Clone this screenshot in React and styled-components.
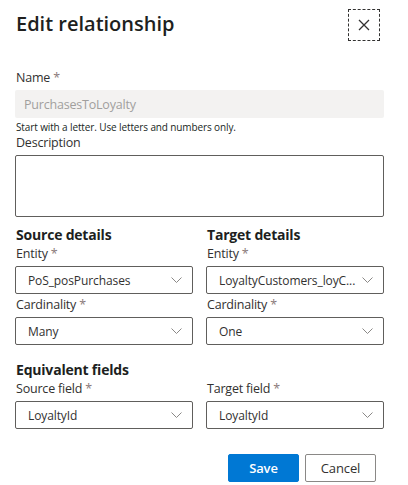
import styled, { createGlobalStyle } from "styled-components";

const GlobalStyle = createGlobalStyle`
  body {
    margin: 0;
    background: #ffffff;
    font-family: "Open Sans", "Noto Sans", sans-serif;
    color: #323130;
  }
`;

const Dialog = styled.div`
  width: 369px;
  padding: 9px 24px 0 15px;
  display: flex;
  flex-direction: column;
`;

const Header = styled.div`
  display: flex;
  justify-content: space-between;
  align-items: flex-start;
  height: 32px;
  margin-bottom: 27px;
`;

const Title = styled.h1`
  margin: 1px 0 0 1px;
  font-size: 20px;
  line-height: 28px;
  font-weight: 600;
  color: #201f1e;
`;

const CloseButton = styled.button`
  width: 32px;
  height: 32px;
  margin-right: 4px;
  padding: 0;
  border: 1px dashed #323130;
  background: transparent;
  display: flex;
  align-items: center;
  justify-content: center;
  cursor: pointer;
`;

const Label = styled.label`
  display: block;
  font-size: 12.5px;
  letter-spacing: -0.2px;
  line-height: 18px;
  padding: 1px 0 3px 1px;
  color: #323130;
`;

const Star = styled.span`
  color: #8a7a7a;
`;

const TextInput = styled.div`
  height: 28px;
  box-sizing: border-box;
  border-radius: 2px;
  background: #f3f2f1;
  padding: 0 9px;
  display: flex;
  align-items: center;
  font-size: 12.5px;
  letter-spacing: -0.2px;
  color: #a19f9d;
`;

const Helper = styled.div`
  margin-top: 3px;
  font-size: 10px;
  letter-spacing: -0.12px;
  line-height: 12px;
  padding-left: 1px;
  color: #201f1e;
`;

const TextArea = styled.textarea`
  height: 62px;
  box-sizing: border-box;
  border: 1px solid #605e5c;
  border-radius: 2px;
  resize: none;
  margin: 0;
  font-family: inherit;
`;

const SectionTitle = styled.div`
  font-size: 14px;
  letter-spacing: -0.2px;
  line-height: 19px;
  font-weight: 700;
  padding-left: 1px;
  color: #201f1e;
`;

const Columns = styled.div`
  display: grid;
  grid-template-columns: 178px 178px;
  column-gap: 13px;
  margin-top: ${(p) => p.$top}px;
`;

const Column = styled.div`
  display: flex;
  flex-direction: column;
`;

const SelectBox = styled.div`
  height: 28px;
  box-sizing: border-box;
  border: 1px solid #605e5c;
  border-radius: 2px;
  padding: 0 10px 0 12px;
  display: flex;
  align-items: center;
  gap: 4px;
  font-size: 12px;
  letter-spacing: -0.1px;
  color: #323130;
  margin-bottom: ${(p) => p.$gap || 0}px;
`;

const Value = styled.span`
  flex: 1;
  min-width: 0;
  white-space: nowrap;
`;

const Footer = styled.div`
  display: flex;
  justify-content: flex-end;
  gap: 6px;
  margin-top: 25px;
  padding-right: 8px;
`;

const Button = styled.button`
  width: 71px;
  height: 28px;
  box-sizing: border-box;
  border-radius: 2px;
  font-family: inherit;
  font-size: 13px;
  letter-spacing: -0.1px;
  cursor: pointer;
  border: 1px solid ${(p) => (p.$primary ? "#0078d4" : "#8a8886")};
  background: ${(p) => (p.$primary ? "#0078d4" : "#ffffff")};
  color: ${(p) => (p.$primary ? "#ffffff" : "#323130")};
  font-weight: ${(p) => (p.$primary ? 600 : 400)};
`;

const Chevron = () => (
  <svg width="11" height="6" viewBox="0 0 11 6" fill="none">
    <polyline points="0.5,0.5 5.5,5.5 10.5,0.5" stroke="#8a8886" strokeWidth="1" />
  </svg>
);

const Select = ({ value, gap }) => (
  <SelectBox $gap={gap}>
    <Value>{value}</Value>
    <Chevron />
  </SelectBox>
);

const Req = ({ children }) => (
  <Label>
    {children} <Star>*</Star>
  </Label>
);

export default function App() {
  return (
    <>
      <GlobalStyle />
      <Dialog>
        <Header>
          <Title>Edit relationship</Title>
          <CloseButton aria-label="Close">
            <svg width="12" height="12" viewBox="0 0 12 12">
              <path d="M1 1 L11 11 M11 1 L1 11" stroke="#323130" strokeWidth="1.3" />
            </svg>
          </CloseButton>
        </Header>

        <Req>Name</Req>
        <TextInput>PurchasesToLoyalty</TextInput>
        <Helper>Start with a letter. Use letters and numbers only.</Helper>
        <Label>Description</Label>
        <TextArea />

        <Columns $top={8}>
          <Column>
            <SectionTitle>Source details</SectionTitle>
            <Req>Entity</Req>
            <Select value="PoS_posPurchases" gap={1} />
            <Req>Cardinality</Req>
            <Select value="Many" />
          </Column>
          <Column>
            <SectionTitle>Target details</SectionTitle>
            <Req>Entity</Req>
            <Select value="LoyaltyCustomers_loyC..." gap={1} />
            <Req>Cardinality</Req>
            <Select value="One" />
          </Column>
        </Columns>

        <Columns $top={15}>
          <Column>
            <SectionTitle>Equivalent fields</SectionTitle>
            <Req>Source field</Req>
            <Select value="LoyaltyId" />
          </Column>
          <Column>
            <SectionTitle>&nbsp;</SectionTitle>
            <Req>Target field</Req>
            <Select value="LoyaltyId" />
          </Column>
        </Columns>

        <Footer>
          <Button $primary>Save</Button>
          <Button>Cancel</Button>
        </Footer>
      </Dialog>
    </>
  );
}
